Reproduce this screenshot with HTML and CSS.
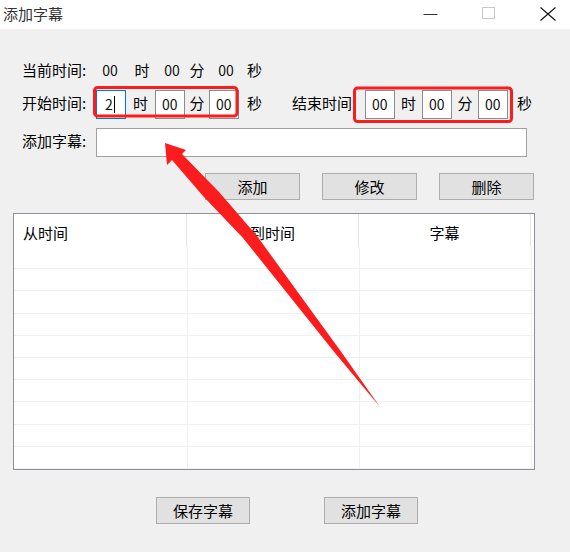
FILE: index.html
```html
<!DOCTYPE html>
<html lang="zh-CN">
<head>
<meta charset="utf-8">
<title>添加字幕</title>
<link rel="stylesheet" href="styles.css">
</head>
<body>
<div class="window">
  <header class="titlebar">
    <span class="title">添加字幕</span>
    <div class="caption">
      <span class="cap cap-min"><svg width="15" height="14" viewBox="0 0 15 14"><line x1="0.5" y1="7.5" x2="14.5" y2="7.5" stroke="#333" stroke-width="1"/></svg></span>
      <span class="cap cap-max"><svg width="13" height="12" viewBox="0 0 13 12"><rect x="0.5" y="0.5" width="12" height="11" fill="none" stroke="#c8c8c8" stroke-width="1"/></svg></span>
      <span class="cap cap-close"><svg width="16" height="14" viewBox="0 0 16 14"><path d="M0.5 0.5 L15.5 13.5 M15.5 0.5 L0.5 13.5" stroke="#111" stroke-width="1.1" fill="none"/></svg></span>
    </div>
  </header>

  <main class="content">
    <div class="row row-now">
      <span class="lbl">当前时间:</span>
      <span class="val w28">00</span>
      <span class="unit w36">时</span>
      <span class="val w24">00</span>
      <span class="unit w26">分</span>
      <span class="val w32">00</span>
      <span class="unit w25">秒</span>
    </div>

    <div class="row row-time">
      <span class="lbl">开始时间:</span>
      <span class="field field-focus">2<span class="caret"></span></span>
      <span class="unit w29">时</span>
      <span class="field">00</span>
      <span class="unit w24">分</span>
      <span class="field">00</span>
      <span class="unit unit-sec">秒</span>
      <span class="lbl lbl-end">结束时间:</span>
      <span class="field">00</span>
      <span class="unit w27">时</span>
      <span class="field">00</span>
      <span class="unit w26">分</span>
      <span class="field">00</span>
      <span class="unit unit-sec2">秒</span>
    </div>

    <div class="row row-sub">
      <span class="lbl">添加字幕:</span>
      <span class="sub-input"></span>
    </div>

    <div class="btn-row">
      <span class="btn">添加</span>
      <span class="btn">修改</span>
      <span class="btn">删除</span>
    </div>

    <div class="table">
      <div class="thead">
        <span class="th th-left">从时间</span>
        <span class="th th-center">到时间</span>
        <span class="th th-center">字幕</span>
      </div>
      <div class="tbody">
        <div class="tr"><span class="td"></span><span class="td"></span><span class="td"></span></div>
        <div class="tr"><span class="td"></span><span class="td"></span><span class="td"></span></div>
        <div class="tr"><span class="td"></span><span class="td"></span><span class="td"></span></div>
        <div class="tr"><span class="td"></span><span class="td"></span><span class="td"></span></div>
        <div class="tr"><span class="td"></span><span class="td"></span><span class="td"></span></div>
        <div class="tr"><span class="td"></span><span class="td"></span><span class="td"></span></div>
        <div class="tr"><span class="td"></span><span class="td"></span><span class="td"></span></div>
        <div class="tr"><span class="td"></span><span class="td"></span><span class="td"></span></div>
        <div class="tr"><span class="td"></span><span class="td"></span><span class="td"></span></div>
        <div class="tr"><span class="td"></span><span class="td"></span><span class="td"></span></div>
      </div>
    </div>

    <div class="bottom-row">
      <span class="btn btn-wide">保存字幕</span>
      <span class="btn btn-wide">添加字幕</span>
    </div>
  </main>

  <svg class="annot" width="570" height="552" viewBox="0 0 570 552">
    <rect x="94.5" y="87.5" width="142.5" height="28.5" rx="3" fill="none" stroke="#fb1d1d" stroke-width="3"/>
    <rect x="354.5" y="88" width="157" height="33.5" rx="3" fill="none" stroke="#fb1d1d" stroke-width="3"/>
    <polygon points="165,143 186,150 182,154 219,192 257,236 342,353 380,407 335,353 243,238 203,196 172,160 167,165" fill="#fb1d1d"/>
  </svg>
</div>
</body>
</html>
```

FILE: styles.css
```css
* { box-sizing: border-box; }

html, body { margin: 0; padding: 0; }

body {
  width: 570px;
  height: 552px;
  background: #f0f0f0;
  font-family: "Noto Sans CJK SC", "Microsoft YaHei", sans-serif;
  font-size: 15px;
  color: #000;
  overflow: hidden;
}

.window {
  position: relative;
  width: 570px;
  height: 552px;
}

/* title bar */
.titlebar {
  height: 29px;
  background: #fff;
  display: flex;
  align-items: flex-start;
}

.title {
  padding: 5px 0 0 3px;
  color: #333;
  font-size: 15px;
  line-height: 17px;
}

.caption {
  margin-left: auto;
  display: flex;
  height: 29px;
}

.cap {
  display: flex;
  align-items: flex-start;
  justify-content: center;
  padding-top: 7px;
}

.cap svg { display: block; }
.cap-min { width: 58px; }
.cap-max { width: 59px; }
.cap-close { width: 52px; justify-content: flex-start; padding-left: 22px; }

/* form rows */
.row {
  display: flex;
  padding-left: 22px;
}

.lbl {
  width: 74px;
  flex: none;
  white-space: nowrap;
}

.unit, .val {
  flex: none;
  text-align: center;
  white-space: nowrap;
}

.val { font-size: 14px; color: #111; }

.w24 { width: 24px; }
.w25 { width: 25px; }
.w26 { width: 26px; }
.w27 { width: 27px; }
.w28 { width: 28px; }
.w29 { width: 29px; }
.w32 { width: 32px; }
.w36 { width: 36px; }

.row-now {
  margin-top: 31px;
  height: 20px;
  line-height: 20px;
}

.row-time {
  margin-top: 10px;
  height: 29px;
}

.row-time .lbl,
.row-time .unit,
.row-sub .lbl {
  line-height: 25px;
}

.unit-sec { padding-left: 8px; width: 23px; text-align: left; }
.unit-sec2 { padding-left: 9px; width: 24px; text-align: left; }
.lbl-end { margin-left: 30px; width: 73px; }

.field {
  flex: none;
  width: 30px;
  height: 29px;
  background: #fff;
  border: 1px solid #8c8c8c;
  font-size: 14px;
  line-height: 27px;
  padding-left: 6px;
  color: #111;
}

.field-focus {
  border-color: #0078d7;
  padding-left: 8px;
  display: flex;
  align-items: center;
}

.caret {
  width: 1px;
  height: 17px;
  background: #000;
  margin-left: 1px;
}

.row-sub {
  margin-top: 9px;
  height: 29px;
}

.sub-input {
  width: 431px;
  height: 29px;
  background: #fff;
  border: 1px solid #a0a0a0;
}

/* buttons */
.btn-row {
  display: flex;
  gap: 22px;
  padding-left: 205px;
  margin-top: 16px;
}

.btn {
  width: 95px;
  height: 27px;
  background: #e1e1e1;
  border: 1px solid #adadad;
  display: flex;
  align-items: center;
  justify-content: center;
  font-size: 15px;
  line-height: 1;
}

.btn-wide { width: 94px; }

/* table */
.table {
  margin: 13px 0 0 13px;
  width: 522px;
  height: 257px;
  border: 1px solid #8e8f99;
  background: #fff;
}

.thead {
  display: grid;
  grid-template-columns: 173px 172px 172px;
  height: 33px;
}

.th {
  border-right: 1px solid #e5e5e5;
  padding-top: 4px;
  line-height: 29px;
  white-space: nowrap;
}

.th-left { padding-left: 9px; }
.th-center { text-align: center; }

.tr {
  display: grid;
  grid-template-columns: 174px 172px 172px;
  height: 22.2px;
  border-bottom: 1px solid #f0f0f0;
}

.td { border-right: 1px solid #f0f0f0; }

.bottom-row {
  display: flex;
  gap: 74px;
  padding-left: 156px;
  margin-top: 27px;
}

/* annotation layer */
.annot {
  position: absolute;
  left: 0;
  top: 0;
  pointer-events: none;
}
```
